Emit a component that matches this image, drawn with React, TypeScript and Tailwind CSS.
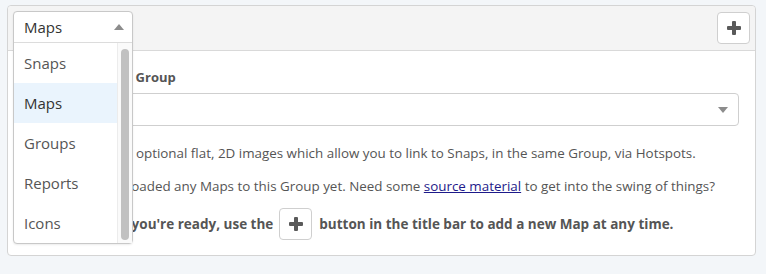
import { useState } from "react";

const items = ["Snaps", "Maps", "Groups", "Reports", "Icons"];

function PlusIcon({ size = 14 }: { size?: number }) {
  return (
    <svg width={size} height={size} viewBox="0 0 14 14" fill="#5a5a5a">
      <rect x="5" y="0" width="4" height="14" rx="1" />
      <rect x="0" y="5" width="14" height="4" rx="1" />
    </svg>
  );
}

function TypeDropdown() {
  const [selected, setSelected] = useState("Maps");
  return (
    <div className="absolute left-[5px] top-[5px] z-10 w-[120px] rounded-[4px] border border-[#c8c8c8] bg-white shadow-[0_1px_2px_rgba(0,0,0,0.08)]">
      <div className="flex h-[31px] items-center justify-between border-b border-[#dcdcdc] pl-[10px] pr-[8px] text-[15px] text-[#333]">
        <span>{selected}</span>
        <svg width="10" height="6" viewBox="0 0 10 6">
          <path d="M0 6 L5 0 L10 6 Z" fill="#8c8c8c" />
        </svg>
      </div>
      <div className="flex">
        <ul className="flex-1">
          {items.map((it) => (
            <li
              key={it}
              onClick={() => setSelected(it)}
              className={
                "flex h-[40px] cursor-pointer items-center pl-[10px] text-[15px] " +
                (it === selected ? "bg-[#eaf4fd] text-[#333]" : "text-[#555]")
              }
            >
              {it}
            </li>
          ))}
        </ul>
        <div className="flex w-[15px] justify-center border-l border-[#ececec] bg-[#fafafa] pb-[3px] pt-[6px]">
          <div className="w-[8px] rounded-full bg-[#c1c1c1]" />
        </div>
      </div>
    </div>
  );
}

export default function App() {
  return (
    <div
      className="h-[274px] w-[766px] bg-[#f3f6f9] px-[7px] pt-[5px] text-[#555]"
      style={{ fontFamily: "'Open Sans', sans-serif" }}
    >
      <div className="relative w-[749px] rounded-[4px] border border-[#d4d4d4] bg-white">
        <div className="flex h-[45px] items-center justify-end rounded-t-[4px] border-b border-[#d9d9d9] bg-[#f4f4f4] pr-[5px]">
          <button className="flex h-[32px] w-[33px] items-center justify-center rounded-[4px] border border-[#cfcfcf] bg-white">
            <PlusIcon />
          </button>
        </div>
        <TypeDropdown />
        <div className="px-[16px] pb-[15px] pt-[16px] text-[13.4px]">
          <div className="mb-[6px] text-[13px] leading-[20px] font-bold">Show Maps from Group</div>
          <div className="flex h-[33px] items-center justify-end rounded-[4px] border border-[#cfcfcf] pr-[10px]">
            <svg width="10" height="6" viewBox="0 0 10 6">
              <path d="M0 0 L10 0 L5 6 Z" fill="#8c8c8c" />
            </svg>
          </div>
          <p className="mt-[17px] leading-[20px]">
            Maps are entirely optional flat, 2D images which allow you to link to Snaps, in the same Group, via Hotspots.
          </p>
          <p className="mt-[13px] leading-[20px]">
            If you haven't uploaded any Maps to this Group yet. Need some{" "}
            <a href="#" className="text-[#1d1a8a] underline">
              source material
            </a>{" "}
            to get into the swing of things?
          </p>
          <p className="mt-[12px] flex items-center text-[13.5px] font-bold">
            <span>Then whenever you're ready, use the</span>
            <span className="ml-[6px] mr-[7px] flex h-[32px] w-[33px] items-center justify-center rounded-[4px] border border-[#cfcfcf] bg-white">
              <PlusIcon />
            </span>
            <span>button in the title bar to add a new Map at any time.</span>
          </p>
        </div>
      </div>
    </div>
  );
}
